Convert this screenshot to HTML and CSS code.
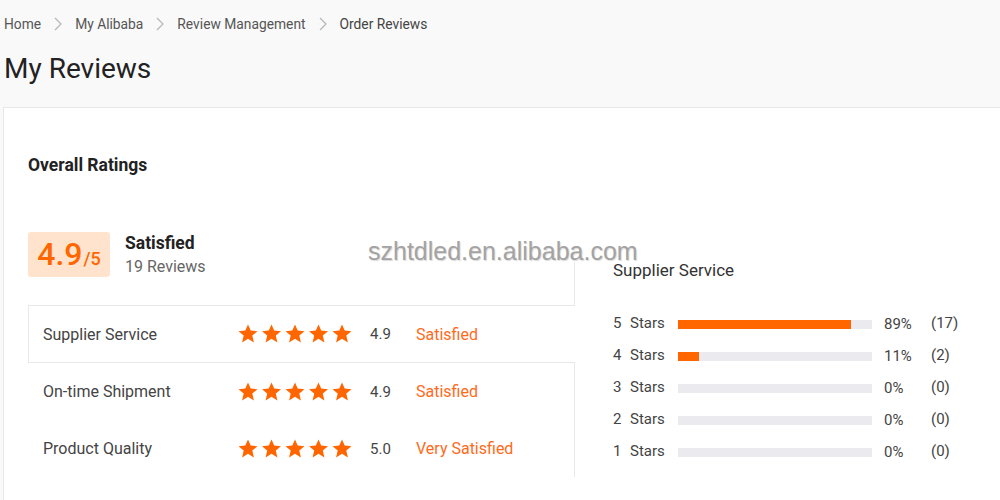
FILE: index.html
```html
<!DOCTYPE html>
<html>
<head>
<meta charset="utf-8">
<link rel="stylesheet" href="styles.css">
</head>
<body>
<nav class="crumbs">
  <span>Home</span>
  <svg class="chev" width="8" height="14" viewBox="0 0 8 14"><polyline points="1,1 7,7 1,13" fill="none" stroke="#b5b5b5" stroke-width="1.2"/></svg>
  <span>My Alibaba</span>
  <svg class="chev" width="8" height="14" viewBox="0 0 8 14"><polyline points="1,1 7,7 1,13" fill="none" stroke="#b5b5b5" stroke-width="1.2"/></svg>
  <span>Review Management</span>
  <svg class="chev" width="8" height="14" viewBox="0 0 8 14"><polyline points="1,1 7,7 1,13" fill="none" stroke="#b5b5b5" stroke-width="1.2"/></svg>
  <span class="current">Order Reviews</span>
</nav>
<h1 class="title">My Reviews</h1>
<section class="card">
  <h2 class="section-title">Overall Ratings</h2>
  <div class="ratings">
    <div class="left">
      <div class="summary">
        <div class="score-box"><span class="big">4.9</span><span class="small">/5</span></div>
        <div class="summary-text">
          <div class="verdict">Satisfied</div>
          <div class="count">19 Reviews</div>
        </div>
      </div>
      <div class="tabs">
        <div class="tab active">
          <span class="tab-label">Supplier Service</span>
          <svg class="stars" width="115" height="20" viewBox="0 0 115 20"><g fill="#ff6600"><polygon points="10,0.5 12.7,6.6 19.5,7.2 14.3,11.6 15.9,18.5 10,14.8 4.1,18.5 5.7,11.6 0.5,7.2 7.3,6.6"/><polygon transform="translate(23.5 0)" points="10,0.5 12.7,6.6 19.5,7.2 14.3,11.6 15.9,18.5 10,14.8 4.1,18.5 5.7,11.6 0.5,7.2 7.3,6.6"/><polygon transform="translate(47 0)" points="10,0.5 12.7,6.6 19.5,7.2 14.3,11.6 15.9,18.5 10,14.8 4.1,18.5 5.7,11.6 0.5,7.2 7.3,6.6"/><polygon transform="translate(70.5 0)" points="10,0.5 12.7,6.6 19.5,7.2 14.3,11.6 15.9,18.5 10,14.8 4.1,18.5 5.7,11.6 0.5,7.2 7.3,6.6"/><polygon transform="translate(94 0)" points="10,0.5 12.7,6.6 19.5,7.2 14.3,11.6 15.9,18.5 10,14.8 4.1,18.5 5.7,11.6 0.5,7.2 7.3,6.6"/></g></svg>
          <span class="tab-score">4.9</span>
          <span class="tab-status">Satisfied</span>
        </div>
        <div class="tab">
          <span class="tab-label">On-time Shipment</span>
          <svg class="stars" width="115" height="20" viewBox="0 0 115 20"><g fill="#ff6600"><polygon points="10,0.5 12.7,6.6 19.5,7.2 14.3,11.6 15.9,18.5 10,14.8 4.1,18.5 5.7,11.6 0.5,7.2 7.3,6.6"/><polygon transform="translate(23.5 0)" points="10,0.5 12.7,6.6 19.5,7.2 14.3,11.6 15.9,18.5 10,14.8 4.1,18.5 5.7,11.6 0.5,7.2 7.3,6.6"/><polygon transform="translate(47 0)" points="10,0.5 12.7,6.6 19.5,7.2 14.3,11.6 15.9,18.5 10,14.8 4.1,18.5 5.7,11.6 0.5,7.2 7.3,6.6"/><polygon transform="translate(70.5 0)" points="10,0.5 12.7,6.6 19.5,7.2 14.3,11.6 15.9,18.5 10,14.8 4.1,18.5 5.7,11.6 0.5,7.2 7.3,6.6"/><polygon transform="translate(94 0)" points="10,0.5 12.7,6.6 19.5,7.2 14.3,11.6 15.9,18.5 10,14.8 4.1,18.5 5.7,11.6 0.5,7.2 7.3,6.6"/></g></svg>
          <span class="tab-score">4.9</span>
          <span class="tab-status">Satisfied</span>
        </div>
        <div class="tab">
          <span class="tab-label">Product Quality</span>
          <svg class="stars" width="115" height="20" viewBox="0 0 115 20"><g fill="#ff6600"><polygon points="10,0.5 12.7,6.6 19.5,7.2 14.3,11.6 15.9,18.5 10,14.8 4.1,18.5 5.7,11.6 0.5,7.2 7.3,6.6"/><polygon transform="translate(23.5 0)" points="10,0.5 12.7,6.6 19.5,7.2 14.3,11.6 15.9,18.5 10,14.8 4.1,18.5 5.7,11.6 0.5,7.2 7.3,6.6"/><polygon transform="translate(47 0)" points="10,0.5 12.7,6.6 19.5,7.2 14.3,11.6 15.9,18.5 10,14.8 4.1,18.5 5.7,11.6 0.5,7.2 7.3,6.6"/><polygon transform="translate(70.5 0)" points="10,0.5 12.7,6.6 19.5,7.2 14.3,11.6 15.9,18.5 10,14.8 4.1,18.5 5.7,11.6 0.5,7.2 7.3,6.6"/><polygon transform="translate(94 0)" points="10,0.5 12.7,6.6 19.5,7.2 14.3,11.6 15.9,18.5 10,14.8 4.1,18.5 5.7,11.6 0.5,7.2 7.3,6.6"/></g></svg>
          <span class="tab-score">5.0</span>
          <span class="tab-status">Very Satisfied</span>
        </div>
      </div>
    </div>
    <div class="right">
      <div class="right-title">Supplier Service</div>
      <div class="dist">
        <div class="dist-row"><span class="dl"><span class="n">5</span>Stars</span><span class="bar"><span class="fill" style="width:89%"></span></span><span class="pct">89%</span><span class="cnt">(17)</span></div>
        <div class="dist-row"><span class="dl"><span class="n">4</span>Stars</span><span class="bar"><span class="fill" style="width:11%"></span></span><span class="pct">11%</span><span class="cnt">(2)</span></div>
        <div class="dist-row"><span class="dl"><span class="n">3</span>Stars</span><span class="bar"><span class="fill" style="width:0%"></span></span><span class="pct">0%</span><span class="cnt">(0)</span></div>
        <div class="dist-row"><span class="dl"><span class="n">2</span>Stars</span><span class="bar"><span class="fill" style="width:0%"></span></span><span class="pct">0%</span><span class="cnt">(0)</span></div>
        <div class="dist-row"><span class="dl"><span class="n">1</span>Stars</span><span class="bar"><span class="fill" style="width:0%"></span></span><span class="pct">0%</span><span class="cnt">(0)</span></div>
      </div>
    </div>
  </div>
  <div class="watermark">szhtdled.en.alibaba.com</div>
</section>
</body>
</html>
```

FILE: styles.css
```css
html, body {
  margin: 0;
  padding: 0;
  background: #f9f9f9;
  overflow: hidden;
  height: 500px;
}
body {
  font-family: Roboto, "Liberation Sans", Arial, sans-serif;
  color: #333;
}
.crumbs {
  display: flex;
  align-items: center;
  gap: 13px;
  height: 20px;
  padding: 14px 0 0 4px;
  font-size: 13.8px;
  color: #555;
}
.crumbs .current {
  color: #444;
}
.chev {
  display: block;
}
.title {
  margin: 0;
  padding: 19px 0 0 4px;
  font-size: 28px;
  font-weight: 400;
  line-height: 32px;
  color: #222;
}
.card {
  position: relative;
  margin: 22px -20px 0 3px;
  height: 420px;
  background: #fff;
  border: 1px solid #e8e8e8;
  padding: 47px 0 0 24px;
  box-sizing: border-box;
}
.section-title {
  margin: 0;
  font-size: 17.5px;
  line-height: 20px;
  font-weight: 700;
  color: #222;
}
.ratings {
  display: flex;
  margin-top: 57px;
}
.left {
  width: 547px;
  flex: none;
}
.summary {
  position: relative;
  display: flex;
  align-items: flex-start;
  gap: 15px;
  height: 73px;
}
.summary::after {
  content: "";
  position: absolute;
  right: 0;
  top: 30px;
  bottom: 0;
  width: 1px;
  background: #e8e8e8;
}
.score-box {
  width: 82px;
  height: 45px;
  background: #ffe3cc;
  border-radius: 3px;
  display: flex;
  align-items: baseline;
  justify-content: center;
  box-sizing: border-box;
  padding-top: 4px;
  color: #ff6600;
}
.score-box .big {
  font-size: 32px;
  font-weight: 500;
  line-height: 36px;
}
.score-box .small {
  font-size: 18px;
  font-weight: 500;
  margin-left: 1px;
}
.verdict {
  font-size: 17.5px;
  font-weight: 700;
  line-height: 22px;
  color: #222;
}
.count {
  font-size: 16px;
  line-height: 26px;
  color: #666;
}
.tabs {
  display: flex;
  flex-direction: column;
}
.tab {
  display: flex;
  align-items: center;
  height: 57px;
  box-sizing: border-box;
  padding-left: 15px;
  border-right: 1px solid #e8e8e8;
  font-size: 16px;
}
.tab.active {
  height: 58px;
  padding-left: 14px;
  border: 1px solid #e8e8e8;
  border-right: none;
}
.tab-label {
  width: 195px;
  color: #444;
}
.stars {
  display: block;
  width: 115px;
  margin-right: 17px;
}
.tab-score {
  width: 46px;
  font-size: 15px;
  color: #444;
}
.tab-status {
  color: #ff6a1a;
}
.right {
  margin-left: 38px;
  padding-top: 28px;
}
.right-title {
  font-size: 17px;
  line-height: 20px;
  color: #333;
}
.dist {
  margin-top: 27px;
}
.dist-row {
  display: flex;
  align-items: center;
  height: 32px;
  font-size: 15px;
  color: #444;
}
.dl {
  width: 65px;
  display: flex;
}
.dl .n {
  width: 17px;
}
.bar {
  width: 194px;
  height: 9px;
  background: #ebebef;
  margin-top: 3px;
  display: flex;
}
.fill {
  display: block;
  height: 100%;
  background: #ff6600;
}
.pct {
  width: 47px;
  margin-left: 12px;
  margin-top: 1px;
}
.watermark {
  position: absolute;
  left: 364px;
  top: 129px;
  font-family: "Liberation Sans", Arial, sans-serif;
  font-size: 25px;
  color: #a3a3a3;
  text-shadow: 1px 1px 1px rgba(0,0,0,0.15);
  pointer-events: none;
}
```
